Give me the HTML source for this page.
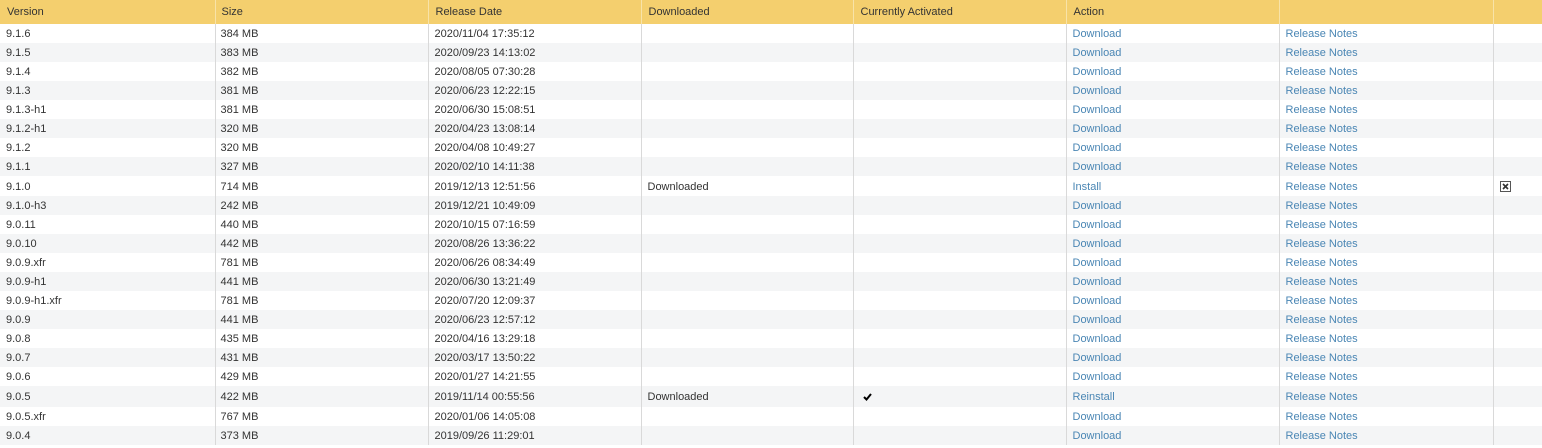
<!DOCTYPE html>
<html><head><meta charset="utf-8"><style>
body{margin:0;width:1542px;height:448px;overflow:hidden;background:#fff;font-family:"Liberation Sans","DejaVu Sans",sans-serif;font-size:11px;color:#333}
table{border-collapse:collapse;table-layout:fixed;width:1542px}
th{background:#f4cf6e;height:24px;text-align:left;font-weight:normal;padding:0 0 0 7px;border-right:1px solid #f8e3a8;color:#333}
td{height:19px;padding:1px 0 0 6px;box-sizing:border-box;border-right:1px solid #d9d9d9;white-space:nowrap;overflow:hidden;vertical-align:middle}
tr:nth-child(even) td{background:#f4f5f6}
a{color:#4a86b4;text-decoration:none}
</style></head><body>
<table>
<colgroup><col style="width:215px"><col style="width:213px"><col style="width:213px"><col style="width:212px"><col style="width:213px"><col style="width:213px"><col style="width:214px"><col style="width:49px"></colgroup>
<thead><tr><th>Version</th><th style="padding-left:6px">Size</th><th>Release Date</th><th>Downloaded</th><th>Currently Activated</th><th>Action</th><th></th><th></th></tr></thead>
<tbody>
<tr><td>9.1.6</td><td style="padding-left:5px">384 MB</td><td>2020/11/04 17:35:12</td><td></td><td></td><td><a>Download</a></td><td><a>Release Notes</a></td><td></td></tr>
<tr><td>9.1.5</td><td style="padding-left:5px">383 MB</td><td>2020/09/23 14:13:02</td><td></td><td></td><td><a>Download</a></td><td><a>Release Notes</a></td><td></td></tr>
<tr><td>9.1.4</td><td style="padding-left:5px">382 MB</td><td>2020/08/05 07:30:28</td><td></td><td></td><td><a>Download</a></td><td><a>Release Notes</a></td><td></td></tr>
<tr><td>9.1.3</td><td style="padding-left:5px">381 MB</td><td>2020/06/23 12:22:15</td><td></td><td></td><td><a>Download</a></td><td><a>Release Notes</a></td><td></td></tr>
<tr><td>9.1.3-h1</td><td style="padding-left:5px">381 MB</td><td>2020/06/30 15:08:51</td><td></td><td></td><td><a>Download</a></td><td><a>Release Notes</a></td><td></td></tr>
<tr><td>9.1.2-h1</td><td style="padding-left:5px">320 MB</td><td>2020/04/23 13:08:14</td><td></td><td></td><td><a>Download</a></td><td><a>Release Notes</a></td><td></td></tr>
<tr><td>9.1.2</td><td style="padding-left:5px">320 MB</td><td>2020/04/08 10:49:27</td><td></td><td></td><td><a>Download</a></td><td><a>Release Notes</a></td><td></td></tr>
<tr><td>9.1.1</td><td style="padding-left:5px">327 MB</td><td>2020/02/10 14:11:38</td><td></td><td></td><td><a>Download</a></td><td><a>Release Notes</a></td><td></td></tr>
<tr><td style="height:20px">9.1.0</td><td style="padding-left:5px">714 MB</td><td>2019/12/13 12:51:56</td><td>Downloaded</td><td></td><td><a>Install</a></td><td><a>Release Notes</a></td><td><svg width="11" height="11" style="display:block"><rect x="0.5" y="0.5" width="10" height="10" fill="#fff" stroke="#555"/><path d="M3 3L8 8M8 3L3 8" stroke="#333" stroke-width="1.6"/></svg></td></tr>
<tr><td>9.1.0-h3</td><td style="padding-left:5px">242 MB</td><td>2019/12/21 10:49:09</td><td></td><td></td><td><a>Download</a></td><td><a>Release Notes</a></td><td></td></tr>
<tr><td>9.0.11</td><td style="padding-left:5px">440 MB</td><td>2020/10/15 07:16:59</td><td></td><td></td><td><a>Download</a></td><td><a>Release Notes</a></td><td></td></tr>
<tr><td>9.0.10</td><td style="padding-left:5px">442 MB</td><td>2020/08/26 13:36:22</td><td></td><td></td><td><a>Download</a></td><td><a>Release Notes</a></td><td></td></tr>
<tr><td>9.0.9.xfr</td><td style="padding-left:5px">781 MB</td><td>2020/06/26 08:34:49</td><td></td><td></td><td><a>Download</a></td><td><a>Release Notes</a></td><td></td></tr>
<tr><td>9.0.9-h1</td><td style="padding-left:5px">441 MB</td><td>2020/06/30 13:21:49</td><td></td><td></td><td><a>Download</a></td><td><a>Release Notes</a></td><td></td></tr>
<tr><td>9.0.9-h1.xfr</td><td style="padding-left:5px">781 MB</td><td>2020/07/20 12:09:37</td><td></td><td></td><td><a>Download</a></td><td><a>Release Notes</a></td><td></td></tr>
<tr><td>9.0.9</td><td style="padding-left:5px">441 MB</td><td>2020/06/23 12:57:12</td><td></td><td></td><td><a>Download</a></td><td><a>Release Notes</a></td><td></td></tr>
<tr><td>9.0.8</td><td style="padding-left:5px">435 MB</td><td>2020/04/16 13:29:18</td><td></td><td></td><td><a>Download</a></td><td><a>Release Notes</a></td><td></td></tr>
<tr><td>9.0.7</td><td style="padding-left:5px">431 MB</td><td>2020/03/17 13:50:22</td><td></td><td></td><td><a>Download</a></td><td><a>Release Notes</a></td><td></td></tr>
<tr><td>9.0.6</td><td style="padding-left:5px">429 MB</td><td>2020/01/27 14:21:55</td><td></td><td></td><td><a>Download</a></td><td><a>Release Notes</a></td><td></td></tr>
<tr><td style="height:21px">9.0.5</td><td style="padding-left:5px">422 MB</td><td>2019/11/14 00:55:56</td><td>Downloaded</td><td><svg width="9" height="8" style="display:block;margin-left:3px"><path d="M1 4L3.5 6.5L8 1" stroke="#000" stroke-width="2" fill="none"/></svg></td><td><a>Reinstall</a></td><td><a>Release Notes</a></td><td></td></tr>
<tr><td>9.0.5.xfr</td><td style="padding-left:5px">767 MB</td><td>2020/01/06 14:05:08</td><td></td><td></td><td><a>Download</a></td><td><a>Release Notes</a></td><td></td></tr>
<tr><td>9.0.4</td><td style="padding-left:5px">373 MB</td><td>2019/09/26 11:29:01</td><td></td><td></td><td><a>Download</a></td><td><a>Release Notes</a></td><td></td></tr>
</tbody></table>
</body></html>
